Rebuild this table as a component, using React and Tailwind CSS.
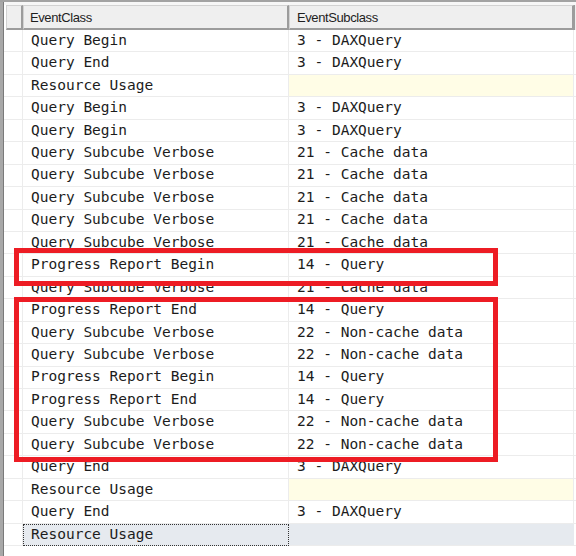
import React from "react";

const rows = [
  ["Query Begin", "3 - DAXQuery"],
  ["Query End", "3 - DAXQuery"],
  ["Resource Usage", null],
  ["Query Begin", "3 - DAXQuery"],
  ["Query Begin", "3 - DAXQuery"],
  ["Query Subcube Verbose", "21 - Cache data"],
  ["Query Subcube Verbose", "21 - Cache data"],
  ["Query Subcube Verbose", "21 - Cache data"],
  ["Query Subcube Verbose", "21 - Cache data"],
  ["Query Subcube Verbose", "21 - Cache data"],
  ["Progress Report Begin", "14 - Query"],
  ["Query Subcube Verbose", "21 - Cache data"],
  ["Progress Report End", "14 - Query"],
  ["Query Subcube Verbose", "22 - Non-cache data"],
  ["Query Subcube Verbose", "22 - Non-cache data"],
  ["Progress Report Begin", "14 - Query"],
  ["Progress Report End", "14 - Query"],
  ["Query Subcube Verbose", "22 - Non-cache data"],
  ["Query Subcube Verbose", "22 - Non-cache data"],
  ["Query End", "3 - DAXQuery"],
  ["Resource Usage", null],
  ["Query End", "3 - DAXQuery"],
  ["Resource Usage", "", true],
];

const mono = { fontFamily: '"DejaVu Sans Mono", monospace' };

export default function App() {
  return (
    <div className="relative w-[576px] h-[556px] bg-white overflow-hidden">
      <div className="h-[2px] bg-[#a3a3a3]" />
      <div className="flex h-[554px]">
        <div className="w-[4px] h-full flex">
          <div className="w-[3px] bg-[#a8a8a8]" />
          <div className="w-[1px] bg-[#7a7a7a]" />
        </div>
        <div className="flex-1 flex flex-col">
          <div className="h-[3px] bg-[#f7f7f7]" />
          {/* header */}
          <div
            className="flex h-[25px] text-[13px] text-[#1e1e1e]"
            style={{ fontFamily: '"Liberation Sans", Arial, sans-serif' }}
          >
            <div className="w-[2px]" />
            <div className="w-[17px] bg-[#efefef] border border-[#d2d2d2] border-r-2 border-b-2 border-r-[#9c9c9c] border-b-[#9c9c9c]" />
            <div className="w-[266px] bg-[#efefef] border border-[#d2d2d2] border-r-2 border-b-2 border-r-[#9c9c9c] border-b-[#9c9c9c] pl-[6px] pt-[1px] flex items-center tracking-[-0.4px]">
              EventClass
            </div>
            <div className="w-[285px] bg-[#efefef] border border-[#d2d2d2] border-r-2 border-b-2 border-r-[#9c9c9c] border-b-[#9c9c9c] pl-[7px] pt-[1px] flex items-center tracking-[-0.4px]">
              EventSubclass
            </div>
            <div className="flex-1 border-l border-[#9c9c9c] bg-[#efefef]" />
          </div>
          {/* rows */}
          <div className="flex flex-col text-[14.5px] text-[#1c1c1c]" style={mono}>
            {rows.map(([a, b, sel], i) => (
              <div key={i} className="flex h-[22.45px]">
                <div className="w-[19px] border-r border-b border-[#ececec] bg-white" />
                <div
                  className={
                    sel
                      ? "w-[266px] bg-[#e6eaef] border border-dotted border-[#333] pl-[7px] flex items-center whitespace-pre"
                      : "w-[266px] bg-white border-r border-b border-[#ececec] pl-[8px] flex items-center whitespace-pre"
                  }
                >
                  {a}
                </div>
                <div
                  className={
                    sel
                      ? "w-[285px] bg-[#e6eaef] border-b border-[#ececec] pl-[8px] flex items-center whitespace-pre"
                      : b === null
                      ? "w-[285px] bg-[#fffde6] border-r border-b border-[#ececec] pl-[8px] flex items-center whitespace-pre"
                      : "w-[285px] bg-white border-r border-b border-[#ececec] pl-[8px] flex items-center whitespace-pre"
                  }
                >
                  {b}
                </div>
                <div className="flex-1 border-b border-[#ececec]" />
              </div>
            ))}
          </div>
        </div>
      </div>
      {/* red highlight boxes */}
      <div className="absolute left-[14px] top-[248px] w-[484px] h-[38px] border-[5px] border-[#ed1c24]" />
      <div className="absolute left-[14px] top-[297px] w-[484px] h-[165px] border-[5px] border-[#ed1c24]" />
    </div>
  );
}
